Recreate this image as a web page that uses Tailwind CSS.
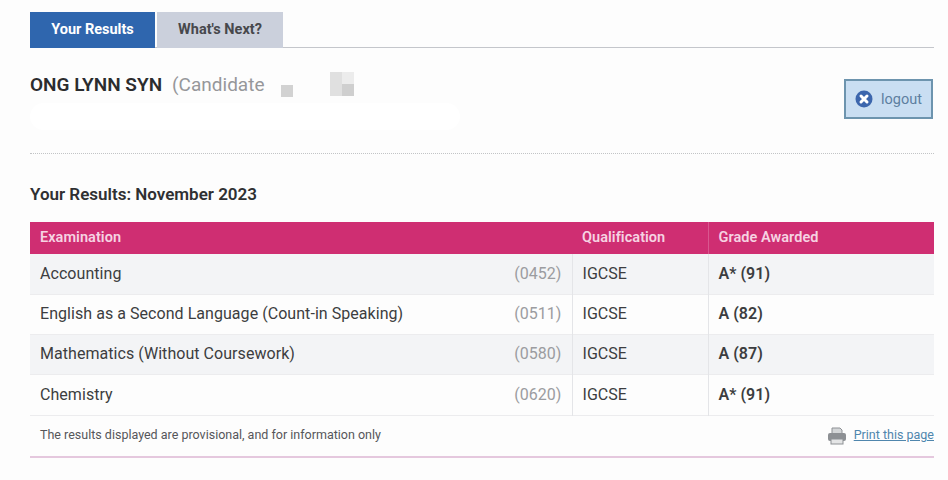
<!DOCTYPE html>
<html><head><meta charset="utf-8">
<script src="https://cdn.jsdelivr.net/npm/@tailwindcss/browser@4"></script>
</head>
<body class="w-[948px] h-[480px] overflow-hidden bg-[#fdfdfd] font-['Roboto',sans-serif] text-[#3c3d40]">
<div class="ml-[30px] w-[904px] pt-3">
  <div class="flex gap-[2px] h-9 border-b border-[#c4c6cb]">
    <div class="w-[125px] h-9 bg-[#2f66ae] text-white text-[14.5px] font-bold flex items-center justify-center">Your Results</div>
    <div class="w-[126px] h-9 bg-[#cbd0dc] text-[#47484c] text-[14.5px] font-bold flex items-center justify-center">What's Next?</div>
  </div>
  <div class="relative h-[106px] border-b border-dotted border-[#c2c4c6] flex justify-between">
    <div class="absolute left-0 top-[55px] w-[430px] h-[27px] rounded-full bg-white"></div>
    <div class="relative pt-[25px] h-12 flex items-baseline text-[19px] leading-6">
      <span class="font-semibold text-[#2b2c2e]">ONG LYNN SYN</span>
      <span class="ml-[10px] text-[#96979a]">(Candidate</span>
      <span class="absolute left-[251px] top-[37px] w-3 h-3 bg-[#d2d2d2]"></span>
      <span class="absolute left-[300px] top-[24px] w-6 h-6 bg-[#ececec]"></span>
      <span class="absolute left-[300px] top-[24px] w-3 h-6 bg-[#e0e0e0]"></span>
      <span class="absolute left-[312px] top-[36px] w-3 h-3 bg-[#cfcfcf]"></span>
    </div>
    <div class="mt-[31px] mr-[1px] w-[89px] h-10 bg-[#c9def2] border-2 border-[#6d94ae] flex items-center justify-center gap-2 text-[14.5px] text-[#5d7fa0]">
      <svg width="18" height="18" viewBox="0 0 18 18"><circle cx="9" cy="9" r="8.5" fill="#3c66ad"/><path d="M6 6l6 6M12 6l-6 6" stroke="#fff" stroke-width="3" stroke-linecap="round"/></svg>
      <span class="pt-[2px]">logout</span>
    </div>
  </div>
  <h2 class="mt-[30px] text-[17px] leading-5 font-semibold text-[#2f3032]">Your Results: November 2023</h2>
  <table class="mt-[18px] w-[904px] table-fixed border-collapse text-base tracking-[0.05px]">
    <colgroup><col class="w-[542px]"><col class="w-[136px]"><col class="w-[226px]"></colgroup>
    <thead>
      <tr class="h-8 bg-[#cf2e72] text-[#f6d3e2] text-[14.5px] font-semibold text-left">
        <th class="px-[10px] font-semibold">Examination</th>
        <th class="px-[10px] font-semibold">Qualification</th>
        <th class="px-[10px] font-semibold border-l border-[#d9578f]">Grade Awarded</th>
      </tr>
    </thead>
    <tbody>
      <tr class="h-10 bg-[#f3f4f6] border-b border-[#ececee]">
        <td class="px-[10px]"><div class="flex justify-between"><span>Accounting</span><span class="text-[#9b9ca0]">(0452)</span></div></td>
        <td class="px-[10px] border-l border-[#e4e5e8]">IGCSE</td>
        <td class="px-[10px] border-l border-[#e4e5e8] font-semibold">A* (91)</td>
      </tr>
      <tr class="h-10 bg-[#fdfdfd] border-b border-[#ececee]">
        <td class="px-[10px]"><div class="flex justify-between"><span>English as a Second Language (Count-in Speaking)</span><span class="text-[#9b9ca0]">(0511)</span></div></td>
        <td class="px-[10px] border-l border-[#e4e5e8]">IGCSE</td>
        <td class="px-[10px] border-l border-[#e4e5e8] font-semibold">A (82)</td>
      </tr>
      <tr class="h-10 bg-[#f3f4f6] border-b border-[#ececee]">
        <td class="px-[10px]"><div class="flex justify-between"><span>Mathematics (Without Coursework)</span><span class="text-[#9b9ca0]">(0580)</span></div></td>
        <td class="px-[10px] border-l border-[#e4e5e8]">IGCSE</td>
        <td class="px-[10px] border-l border-[#e4e5e8] font-semibold">A (87)</td>
      </tr>
      <tr class="h-[41px] bg-[#fdfdfd] border-b border-[#ececee]">
        <td class="px-[10px]"><div class="flex justify-between"><span>Chemistry</span><span class="text-[#9b9ca0]">(0620)</span></div></td>
        <td class="px-[10px] border-l border-[#e4e5e8]">IGCSE</td>
        <td class="px-[10px] border-l border-[#e4e5e8] font-semibold">A* (91)</td>
      </tr>
    </tbody>
  </table>
  <div class="h-[42px] border-b-2 border-[#e5c8de] flex items-center justify-between pl-[10px] text-[12.5px]">
    <span class="text-[#55565a]">The results displayed are provisional, and for information only</span>
    <span class="flex items-center gap-[7px]">
      <svg width="20" height="20" viewBox="0 0 20 20"><path d="M5 8V2h8l2 2v4z" fill="#d4d6d8" stroke="#8e9195"/><rect x="1" y="7" width="18" height="8" rx="2" fill="#8d9094"/><rect x="4" y="13" width="12" height="5" fill="#e4e5e6" stroke="#8e9195"/></svg>
      <span class="text-[#4f86ad] underline">Print this page</span>
    </span>
  </div>
</div>
</body></html>
